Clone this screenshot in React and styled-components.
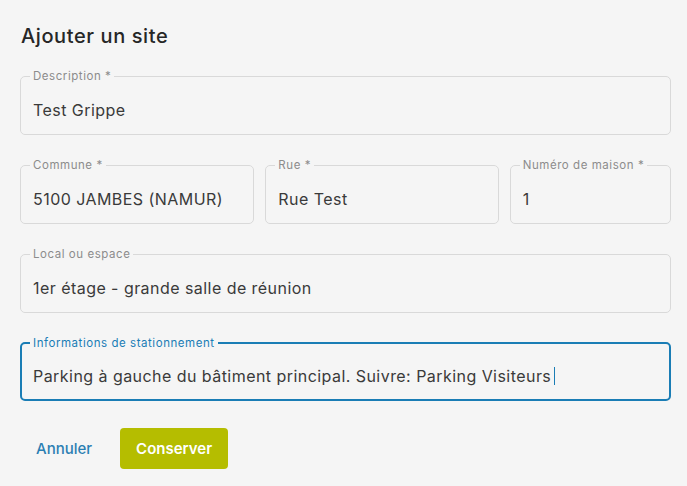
import React from "react";
import styled, { createGlobalStyle } from "styled-components";

const GlobalStyle = createGlobalStyle`
  html, body {
    margin: 0;
    background: #f5f5f5;
  }
  body {
    font-family: Inter, "Open Sans", sans-serif;
    color: #333;
  }
`;

const Page = styled.div`
  width: 687px;
  height: 486px;
  box-sizing: border-box;
  padding: 24px 16px 0 20px;
`;

const Title = styled.h2`
  margin: 0 0 21px 1px;
  font-size: 20px;
  font-weight: 500;
  line-height: 24px;
  letter-spacing: 0.6px;
  color: #262626;
`;

const Form = styled.div`
  display: flex;
  flex-direction: column;
  gap: 23px;
`;

const Row = styled.div`
  display: grid;
  grid-template-columns: 234fr 233fr 161fr;
  gap: 11px;
`;

const Field = styled.fieldset`
  margin: 0;
  min-width: 0;
  padding: 0 11px 0 12px;
  border: ${p => (p.$focused ? "2px solid #1a7db5" : "1px solid #d9d9d9")};
  border-radius: 5px;
  ${p => p.$focused && "padding-left: 11px;"}
`;

const Legend = styled.legend`
  margin-left: -3px;
  padding: 0 3px;
  font-size: 11.5px;
  line-height: 14px;
  letter-spacing: 0.55px;
  color: ${p => (p.$focused ? "#1a7db5" : "#8c8c8c")};
`;

const Value = styled.div`
  height: 38px;
  margin: ${p => (p.$focused ? "7px 0 4px" : "8px 0 5px")};
  display: flex;
  align-items: center;
  font-size: 16px;
  letter-spacing: 0.45px;
  white-space: nowrap;
  overflow: hidden;
  color: #3a3a3a;
`;

const Caret = styled.span`
  display: inline-block;
  width: 1px;
  height: 18px;
  margin-left: 3px;
  background: #1a7db5;
`;

const Actions = styled.div`
  display: flex;
  align-items: center;
  gap: 28px;
  margin-top: 27px;
  padding-left: 16px;
`;

const LinkButton = styled.button`
  border: none;
  background: none;
  padding: 0;
  font-family: inherit;
  font-size: 15px;
  font-weight: 500;
  color: #2b7fb3;
  cursor: pointer;
`;

const PrimaryButton = styled.button`
  height: 41px;
  padding: 0 16px;
  border: none;
  border-radius: 4px;
  background: #b5bd00;
  font-family: inherit;
  font-size: 15px;
  font-weight: 600;
  color: #fff;
  cursor: pointer;
`;

const TextField = ({ label, value, focused }) => (
  <Field $focused={focused}>
    <Legend $focused={focused}>{label}</Legend>
    <Value $focused={focused}>
      {value}
      {focused && <Caret />}
    </Value>
  </Field>
);

export default function App() {
  return (
    <>
      <GlobalStyle />
      <Page>
        <Title>Ajouter un site</Title>
        <Form>
          <TextField label="Description *" value="Test Grippe" />
          <Row>
            <TextField label="Commune *" value="5100 JAMBES (NAMUR)" />
            <TextField label="Rue *" value="Rue Test" />
            <TextField label="Numéro de maison *" value="1" />
          </Row>
          <TextField label="Local ou espace" value="1er étage - grande salle de réunion" />
          <TextField
            label="Informations de stationnement"
            value="Parking à gauche du bâtiment principal. Suivre: Parking Visiteurs"
            focused
          />
        </Form>
        <Actions>
          <LinkButton>Annuler</LinkButton>
          <PrimaryButton>Conserver</PrimaryButton>
        </Actions>
      </Page>
    </>
  );
}
